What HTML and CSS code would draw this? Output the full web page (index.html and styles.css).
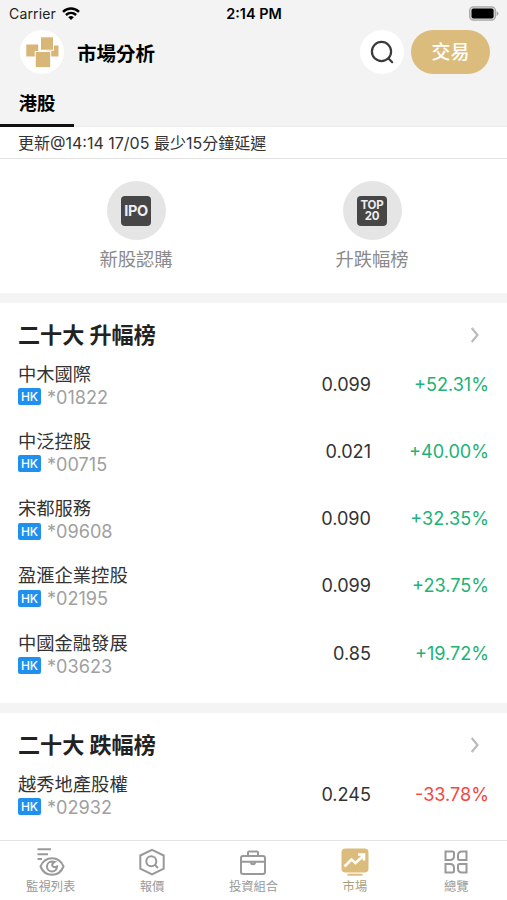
FILE: index.html
```
<!DOCTYPE html>
<html lang="zh-Hant">
<head>
  <meta charset="UTF-8">
  <meta name="viewport" content="width=device-width, initial-scale=1.0">
  <title>市場分析</title>
  <link rel="stylesheet" href="styles.css">
</head>
<body>
  <header class="header">
    <div class="status-bar">
      <div class="carrier">
        <span>Carrier</span>
        <svg class="wifi" viewBox="0 0 18 13" fill="none" stroke="#000" stroke-width="2.5">
          <path d="M1 4.8C5.7.4 12.3.4 17 4.8"/>
          <path d="M3.9 8C7 5.2 11 5.2 14.1 8"/>
          <path d="M6.2 10.2Q9 7.9 11.8 10.2L9 13Z" fill="#000" stroke="none"/>
        </svg>
      </div>
      <div class="clock">2:14 PM</div>
      <div class="battery-wrap">
        <svg class="battery" viewBox="0 0 31 15">
          <rect x=".7" y=".7" width="26.6" height="13.6" rx="4" fill="#d4d4d4" stroke="#a8a8a8" stroke-width="1.3"/>
          <rect x="2.6" y="2.4" width="22.8" height="10.2" rx="2" fill="#000"/>
          <path d="M28.5 4.8Q30.5 5.8 30.5 7.5T28.5 10.2Z" fill="#a8a8a8"/>
        </svg>
      </div>
    </div>

    <div class="title-bar">
      <div class="logo">
        <svg viewBox="0 0 44 44" fill="#d7b678" stroke="#fff" stroke-width="1">
          <rect x="26" y="15" width="13" height="12"/>
          <rect x="5.8" y="14" width="13" height="13"/>
          <rect x="20.5" y="6.8" width="13" height="13.4"/>
          <rect x="15.2" y="21.5" width="15.5" height="16.2"/>
        </svg>
      </div>
      <h1>市場分析</h1>
      <a href="#" class="search" aria-label="搜尋">
        <svg viewBox="0 0 24 24" fill="none" stroke="#3a3a3c" stroke-width="2.2" stroke-linecap="round">
          <circle cx="11.5" cy="11.5" r="9.6"/>
          <path d="M18.5 18.5L22.2 22.2"/>
        </svg>
      </a>
      <a href="#" class="trade">交易</a>
    </div>

    <div class="tabs">
      <a href="#" class="active">港股</a>
    </div>
  </header>

  <div class="update">更新@14:14 17/05 最少15分鐘延遲</div>

  <div class="shortcuts">
    <a href="#" class="shortcut">
      <span class="circle"><span class="box">IPO</span></span>
      <span>新股認購</span>
    </a>
    <a href="#" class="shortcut">
      <span class="circle"><span class="box small"><span>TOP</span><span>20</span></span></span>
      <span>升跌幅榜</span>
    </a>
  </div>

  <section class="ranking">
    <div class="ranking-title">
      <h2>二十大 升幅榜</h2>
      <svg class="chevron" viewBox="0 0 10 16"><path d="M1.7 1L7.5 8L1.7 15"/></svg>
    </div>
    <div class="stock">
      <div class="info">
        <div class="name">中木國際</div>
        <div class="code"><span class="hk">HK</span>*01822</div>
      </div>
      <div class="price">0.099</div>
      <div class="change up">+52.31%</div>
    </div>
    <div class="stock">
      <div class="info">
        <div class="name">中泛控股</div>
        <div class="code"><span class="hk">HK</span>*00715</div>
      </div>
      <div class="price">0.021</div>
      <div class="change up">+40.00%</div>
    </div>
    <div class="stock">
      <div class="info">
        <div class="name">宋都服務</div>
        <div class="code"><span class="hk">HK</span>*09608</div>
      </div>
      <div class="price">0.090</div>
      <div class="change up">+32.35%</div>
    </div>
    <div class="stock">
      <div class="info">
        <div class="name">盈滙企業控股</div>
        <div class="code"><span class="hk">HK</span>*02195</div>
      </div>
      <div class="price">0.099</div>
      <div class="change up">+23.75%</div>
    </div>
    <div class="stock">
      <div class="info">
        <div class="name">中國金融發展</div>
        <div class="code"><span class="hk">HK</span>*03623</div>
      </div>
      <div class="price">0.85</div>
      <div class="change up">+19.72%</div>
    </div>
  </section>

  <section class="ranking">
    <div class="ranking-title">
      <h2>二十大 跌幅榜</h2>
      <svg class="chevron" viewBox="0 0 10 16"><path d="M1.7 1L7.5 8L1.7 15"/></svg>
    </div>
    <div class="stock">
      <div class="info">
        <div class="name">越秀地產股權</div>
        <div class="code"><span class="hk">HK</span>*02932</div>
      </div>
      <div class="price">0.245</div>
      <div class="change down">-33.78%</div>
    </div>
  </section>

  <nav class="bottom-nav">
    <a href="#">
      <svg viewBox="0 0 28 28">
        <path d="M.5 1.3H14M.5 6.3H11M.5 11H5"/>
        <path d="M3.5 18.5C8 7.5 22 7.5 26.5 18.5C22 29.5 8 29.5 3.5 18.5Z"/>
        <path d="M15 13.5A5 5 0 1 0 20 18.5Q17 20 15.5 18Q14.3 16 17.5 14Z"/>
      </svg>
      <span>監視列表</span>
    </a>
    <a href="#">
      <svg viewBox="0 0 28 28">
        <path d="M14 1.8L25.7 7.5V20.7L14 26.5L2.3 20.7V7.5Z"/>
        <circle cx="13.3" cy="13.2" r="5"/>
        <path d="M17 17L20 20"/>
      </svg>
      <span>報價</span>
    </a>
    <a href="#">
      <svg viewBox="0 0 28 28">
        <rect x="2" y="8" width="24" height="18" rx="2"/>
        <path d="M9 8V4.5Q9 3.5 10 3.5H18Q19 3.5 19 4.5V8M2 13.7H26M12 14.2Q12 16.2 14 16.2T16 14.2"/>
      </svg>
      <span>投資組合</span>
    </a>
    <a href="#" class="active">
      <svg viewBox="0 0 28 28">
        <rect class="fill" x=".5" y=".5" width="27" height="24" rx="4"/>
        <path class="fill" d="M6.5 25.7H21.5V27.7H6.5Z"/>
        <path class="line" d="M3.5 18.5L10.5 11.5L14.5 15L22 8M17 6.5H23V12.5"/>
      </svg>
      <span>市場</span>
    </a>
    <a href="#">
      <svg viewBox="0 0 28 28">
        <path d="M3.5 3.5H10.5Q12 3.5 12 5V8Q12 12 8 12H3.5ZM24.5 3.5V12H17.5Q16 12 16 10.5V7.5Q16 3.5 20 3.5ZM3.5 16H8Q12 16 12 20V23Q12 24.5 10.5 24.5H3.5ZM24.5 24.5H20Q16 24.5 16 20.5V17.5Q16 16 17.5 16H24.5Z"/>
      </svg>
      <span>總覽</span>
    </a>
  </nav>
</body>
</html>
```
FILE: styles.css
```
* {
  box-sizing: border-box;
}

body {
  margin: 0;
  height: 900px;
  display: flex;
  flex-direction: column;
  overflow: hidden;
  font-family: Inter, "Noto Sans CJK TC", sans-serif;
  background-color: #fff;
  color: #333;
}

a {
  color: inherit;
  text-decoration: none;
}

h1, h2 {
  margin: 0;
}

.header {
  flex: none;
  height: 127px;
  background-color: #f3f3f3;
  border-bottom: 1px solid #ececec;
}

/* Status bar */
.status-bar {
  display: grid;
  grid-template-columns: 1fr auto 1fr;
  align-items: center;
  height: 27px;
  padding: 0 8px 0 9px;
  color: #222;
  font-size: 14px;
}

.carrier {
  display: flex;
  align-items: center;
  gap: 6px;
  letter-spacing: 0.15px;
}

.wifi {
  width: 18px;
  height: 13px;
}

.clock {
  color: #000;
  font-weight: 600;
  font-size: 14.4px;
}

.battery-wrap {
  display: flex;
  justify-content: flex-end;
}

.battery {
  width: 30px;
  height: 15px;
}

/* Title bar */
.title-bar {
  display: flex;
  align-items: center;
  height: 50px;
  padding: 0 17px 0 20px;
}

.logo, .search {
  width: 44px;
  height: 44px;
  border-radius: 50%;
  background-color: #fff;
}

.logo svg {
  display: block;
}

.title-bar h1 {
  flex: 1;
  margin-left: 13px;
  padding-top: 3px;
  color: #000;
  font-size: 19.5px;
  font-weight: 700;
  line-height: 28px;
}

.search {
  display: flex;
  justify-content: center;
  align-items: center;
}

.search svg {
  width: 24px;
  height: 24px;
}

.trade {
  width: 79px;
  height: 44px;
  margin-left: 7px;
  border-radius: 22px;
  background-color: #dcbc7c;
  color: #fff;
  font-size: 19px;
  font-weight: 500;
  line-height: 45px;
  text-align: center;
}

.tabs {
  display: flex;
  height: 50px;
}

.tabs a {
  width: 74px;
  border-bottom: 3px solid #111;
  color: #000;
  font-size: 18.3px;
  font-weight: 700;
  line-height: 53px;
  text-align: center;
}

.update {
  flex: none;
  height: 32px;
  padding-left: 18px;
  border-bottom: 1px solid #e2e2e2;
  font-size: 16px;
  line-height: 33px;
}

/* Shortcuts */
.shortcuts {
  flex: none;
  display: grid;
  grid-template-columns: 1fr 1fr;
  height: 134px;
  padding: 22px 17px 0 18px;
}

.shortcut {
  display: flex;
  flex-direction: column;
  align-items: center;
  gap: 5px;
  color: #8a8a8a;
  font-size: 18.3px;
  line-height: 28px;
}

.circle {
  display: flex;
  justify-content: center;
  align-items: center;
  width: 59px;
  height: 59px;
  border-radius: 50%;
  background-color: #e5e5e5;
}

.box {
  width: 30px;
  height: 30px;
  border-radius: 4px;
  background-color: #464646;
  color: #eee;
  font-size: 14.5px;
  font-weight: 700;
  letter-spacing: -0.4px;
  line-height: 30px;
  text-align: center;
}

.box.small {
  display: flex;
  flex-direction: column;
  justify-content: center;
  gap: 1px;
  font-size: 11.5px;
  letter-spacing: -0.2px;
  line-height: 10px;
}

/* Rankings */
.ranking {
  flex: none;
  padding: 17px 18px 16px;
  border-top: 10px solid #f4f4f4;
}

.ranking-title {
  display: flex;
  justify-content: space-between;
  align-items: center;
  height: 31px;
  padding-right: 9px;
}

.ranking-title h2 {
  color: #222;
  font-size: 22.1px;
  font-weight: 700;
  line-height: 31px;
}

.chevron {
  width: 10px;
  height: 16px;
  margin-bottom: 1px;
  fill: none;
  stroke: #bbb;
  stroke-width: 2.2;
}

.stock {
  display: flex;
  align-items: center;
  height: 67.25px;
  font-size: 18.1px;
}

.info {
  flex: 1;
}

.name {
  font-size: 18.3px;
  line-height: 24px;
}

.code {
  display: flex;
  align-items: center;
  color: #a0a0a0;
  line-height: 22px;
}

.hk {
  width: 23px;
  height: 17px;
  margin-right: 6px;
  border-radius: 2px;
  background-color: #2090ee;
  color: #fff;
  font-size: 12px;
  font-weight: 500;
  line-height: 18px;
  text-align: center;
}

.price {
  padding-bottom: 2px;
  text-align: right;
}

.change {
  width: 118px;
  padding-bottom: 2px;
  text-align: right;
}

.up {
  color: #20b277;
}

.down {
  color: #f4473f;
}

/* Bottom navigation */
.bottom-nav {
  position: fixed;
  left: 0;
  bottom: 0;
  display: grid;
  grid-template-columns: repeat(5, 1fr);
  width: 100%;
  height: 60px;
  border-top: 1px solid #e4e4e4;
  background-color: #fff;
}

.bottom-nav a {
  display: flex;
  flex-direction: column;
  align-items: center;
  padding-top: 7px;
  color: #999;
  font-size: 12.3px;
  line-height: 21px;
}

.bottom-nav svg {
  width: 28px;
  height: 28px;
  fill: none;
  stroke: #999;
  stroke-width: 2;
}

.bottom-nav .active {
  color: #a9a07c;
}

.bottom-nav .fill {
  fill: #dcbc7c;
  stroke: none;
}

.bottom-nav .line {
  stroke: #fff;
  stroke-width: 2.6;
}
```
